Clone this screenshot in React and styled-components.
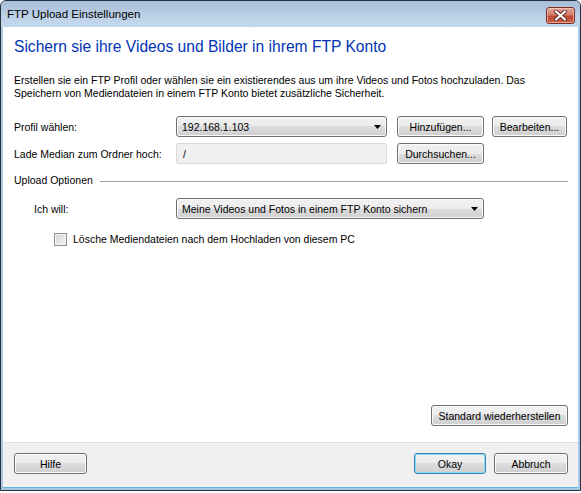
import React from "react";
import styled, { createGlobalStyle } from "styled-components";

const GlobalStyle = createGlobalStyle`
  html, body {
    margin: 0;
    padding: 0;
    background: #ffffff;
  }
  body {
    font-family: "Liberation Sans", Arial, sans-serif;
    font-size: 10.5px;
    color: #000;
  }
`;

const Window = styled.div`
  box-sizing: border-box;
  width: 581px;
  height: 491px;
  border: 1px solid #26313f;
  border-radius: 6px 6px 0 0;
  background: #a9c8e6;
  display: flex;
  flex-direction: column;
  overflow: hidden;
`;

const TitleBar = styled.div`
  height: 26px;
  flex: none;
  display: flex;
  align-items: center;
  justify-content: space-between;
  padding: 0 5px 3px 6px;
  box-sizing: border-box;
  background: linear-gradient(#a8bed6, #bdd1e8 60%, #c3d7ec);
`;

const Title = styled.span`
  font-size: 11.5px;
  color: #000;
  padding-top: 3px;
`;

const CloseButton = styled.div`
  width: 29px;
  height: 17px;
  box-sizing: border-box;
  border: 1px solid #7a2e26;
  border-radius: 3px;
  background: linear-gradient(#e6a99c, #d27a67 45%, #bd4a35 55%, #c9624a);
  box-shadow: inset 0 0 0 1px rgba(255, 220, 210, 0.55);
  display: flex;
  align-items: center;
  justify-content: center;
  margin-top: 6px;
`;

const Client = styled.div`
  flex: 1;
  margin: 0 2px 2px 2px;
  display: flex;
  flex-direction: column;
  background: #fff;
  border-bottom: 1px solid #5fb3e0;
`;

const Body = styled.div`
  flex: 1;
  display: flex;
  flex-direction: column;
  padding: 10px 10px 16px 11px;
  background: #fff;
`;

const Heading = styled.h1`
  margin: 0;
  font-size: 15.6px;
  line-height: 20px;
  font-weight: normal;
  color: #0033b4;
`;

const Intro = styled.p`
  margin: 17px 0 0 0;
  line-height: 13px;
`;

const Form = styled.div`
  display: grid;
  grid-template-columns: 162px 221px 95px 75px;
  grid-auto-rows: 21px;
  row-gap: 6px;
  margin-top: ${(p) => p.$top}px;
  align-items: center;
`;

const Label = styled.span`
  padding-left: ${(p) => p.$indent || 0}px;
`;

const buttonFace = `
  box-sizing: border-box;
  height: 21px;
  border: 1px solid #707070;
  border-radius: 3px;
  background: linear-gradient(#f2f2f2 0%, #ebebeb 50%, #dddddd 50%, #cfcfcf 100%);
  box-shadow: inset 0 0 0 1px #fbfbfb;
  font-family: "Liberation Sans", Arial, sans-serif;
  font-size: 10.5px;
  color: #000;
`;

const Button = styled.button`
  ${buttonFace}
  width: ${(p) => p.$w}px;
  padding: 0;
  margin: 0;
  border-color: ${(p) => (p.$primary ? "#3c7fb1" : "#707070")};
  box-shadow: ${(p) =>
    p.$primary ? "inset 0 0 0 1px #8fdcf8" : "inset 0 0 0 1px #fbfbfb"};
`;

const Combo = styled.div`
  ${buttonFace}
  width: ${(p) => p.$w}px;
  grid-column: ${(p) => p.$span || "auto"};
  display: flex;
  align-items: center;
  justify-content: space-between;
  padding: 0 5px 0 5px;
`;

const TextField = styled.input`
  box-sizing: border-box;
  width: 211px;
  height: 21px;
  margin: 0;
  border: 1px solid #d9d9d9;
  border-radius: 2px;
  background: #f0f0f0;
  padding: 0 6px;
  font-family: "Liberation Sans", Arial, sans-serif;
  font-size: 10.5px;
  color: #000;
  outline: none;
`;

const Section = styled.div`
  display: flex;
  align-items: center;
  gap: 7px;
  margin-top: 10px;
  line-height: 13px;
`;

const Rule = styled.div`
  flex: 1;
  height: 1px;
  background: #a0a0a0;
  margin-top: 1px;
`;

const CheckRow = styled.label`
  display: flex;
  align-items: center;
  gap: 6px;
  margin: 14px 0 0 40px;
  line-height: 13px;
`;

const CheckBox = styled.span`
  box-sizing: border-box;
  width: 13px;
  height: 13px;
  border: 1px solid #8f8f8f;
  background: linear-gradient(135deg, #d2d2d2, #f6f6f6);
  box-shadow: inset 0 0 0 1px #f2f2f2;
`;

const Spacer = styled.div`
  flex: 1;
`;

const RightAlign = styled.div`
  display: flex;
  justify-content: flex-end;
`;

const Footer = styled.div`
  height: 45px;
  flex: none;
  box-sizing: border-box;
  border-top: 1px solid #dfdfdf;
  background: #f0f0f0;
  display: flex;
  align-items: flex-start;
  padding: 10px 10px 0 11px;
  gap: 8px;
`;

function Arrow() {
  return (
    <svg width="7" height="4" viewBox="0 0 7 4">
      <path d="M0 0H7L3.5 4Z" fill="#000" />
    </svg>
  );
}

export default function App() {
  return (
    <>
      <GlobalStyle />
      <Window>
        <TitleBar>
          <Title>FTP Upload Einstellungen</Title>
          <CloseButton>
            <svg width="13" height="11" viewBox="0 0 13 11">
              <path
                d="M2 1.5L11 9.5M11 1.5L2 9.5"
                stroke="#5a2a24"
                strokeWidth="4"
                strokeLinecap="round"
              />
              <path
                d="M2 1.5L11 9.5M11 1.5L2 9.5"
                stroke="#fff"
                strokeWidth="2.2"
                strokeLinecap="round"
              />
            </svg>
          </CloseButton>
        </TitleBar>
        <Client>
          <Body>
            <Heading>Sichern sie ihre Videos und Bilder in ihrem FTP Konto</Heading>
            <Intro>
              Erstellen sie ein FTP Profil oder wählen sie ein existierendes aus
              um ihre Videos und Fotos hochzuladen. Das
              <br />
              Speichern von Mediendateien in einem FTP Konto bietet zusätzliche
              Sicherheit.
            </Intro>
            <Form $top={16}>
              <Label>Profil wählen:</Label>
              <Combo $w={211}>
                <span>192.168.1.103</span>
                <Arrow />
              </Combo>
              <Button $w={87}>Hinzufügen...</Button>
              <Button $w={75}>Bearbeiten...</Button>
              <Label>Lade Median zum Ordner hoch:</Label>
              <TextField readOnly value="/" />
              <Button $w={87}>Durchsuchen...</Button>
            </Form>
            <Section>
              <span>Upload Optionen</span>
              <Rule />
            </Section>
            <Form $top={11}>
              <Label $indent={20}>Ich will:</Label>
              <Combo $w={308} $span="span 2">
                <span>Meine Videos und Fotos in einem FTP Konto sichern</span>
                <Arrow />
              </Combo>
            </Form>
            <CheckRow>
              <CheckBox />
              <span>Lösche Mediendateien nach dem Hochladen von diesem PC</span>
            </CheckRow>
            <Spacer />
            <RightAlign>
              <Button $w={137}>Standard wiederherstellen</Button>
            </RightAlign>
          </Body>
          <Footer>
            <Button $w={73}>Hilfe</Button>
            <Spacer />
            <Button $w={72} $primary>
              Okay
            </Button>
            <Button $w={74}>Abbruch</Button>
          </Footer>
        </Client>
      </Window>
    </>
  );
}
